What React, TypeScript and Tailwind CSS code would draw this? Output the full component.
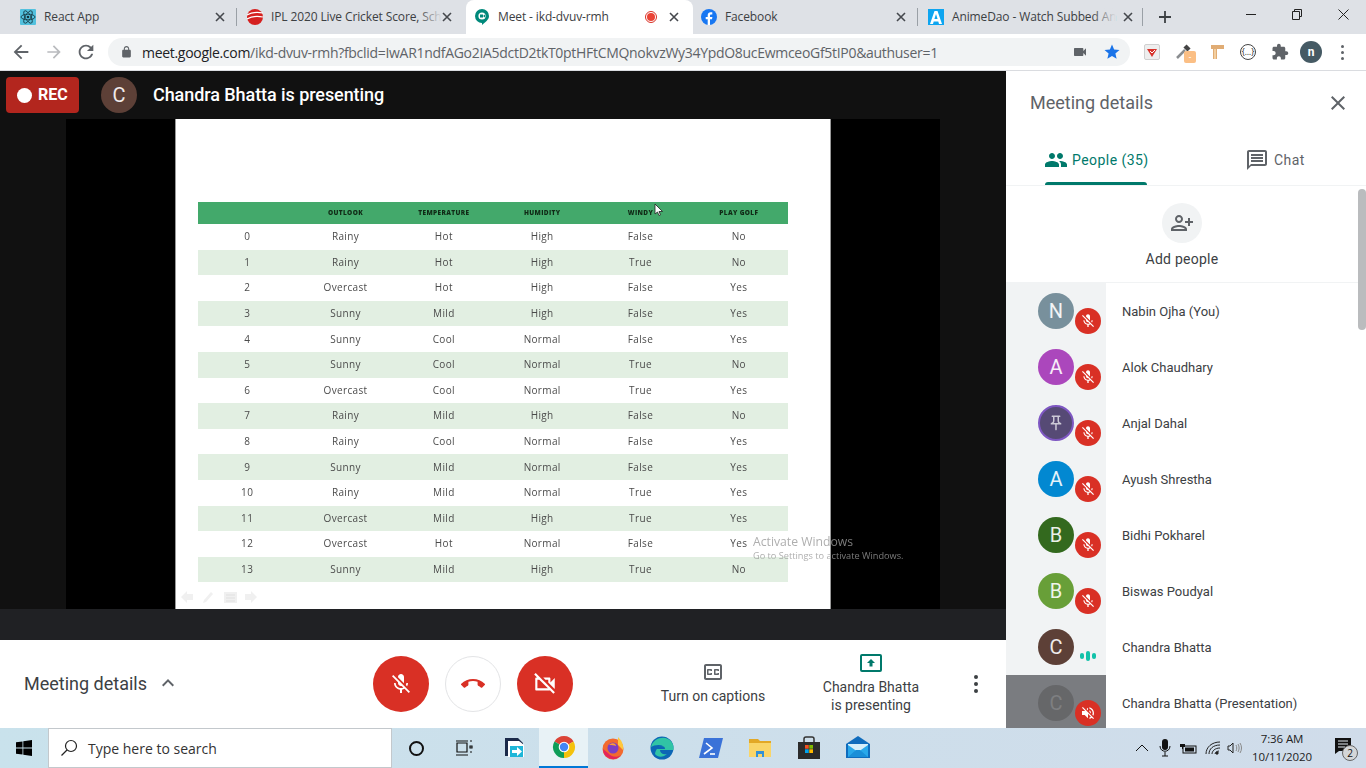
import React from "react";

const P = {
  micOff: "M19 11h-1.7c0 .74-.16 1.43-.43 2.05l1.23 1.23c.56-.98.9-2.09.9-3.28zm-4.02.17c0-.06.02-.11.02-.17V5c0-1.66-1.34-3-3-3S9 3.34 9 5v.18l5.98 5.99zM4.27 3L3 4.27l6.01 6.01V11c0 1.66 1.33 3 2.99 3 .22 0 .44-.03.65-.08l1.66 1.66c-.71.33-1.5.52-2.31.52-2.76 0-5.3-2.1-5.3-5.1H5c0 3.41 2.72 6.23 6 6.72V21h2v-3.28c.91-.13 1.77-.45 2.54-.9L19.73 21 21 19.73 4.27 3z",
  camOff: "M9.56 8l-2-2-4.15-4.14L2 3.27 4.73 6H4c-.55 0-1 .45-1 1v10c0 .55.45 1 1 1h12c.21 0 .39-.08.55-.18L19.73 21l1.41-1.41-8.86-8.86L9.56 8zM5 16V8h1.73l8 8H5zm10-8v2.61l6 6V6.5l-4 4V7c0-.55-.45-1-1-1h-5.61l2 2H15z",
  callEnd: "M12 9c-1.6 0-3.15.25-4.6.72v3.1c0 .39-.23.74-.56.9-.98.49-1.87 1.12-2.66 1.85-.18.18-.43.28-.7.28-.28 0-.53-.11-.71-.29L.29 13.08c-.18-.17-.29-.42-.29-.7 0-.28.11-.53.29-.71C3.34 8.78 7.46 7 12 7s8.66 1.78 11.71 4.67c.18.18.29.43.29.71 0 .28-.11.53-.29.71l-2.48 2.48c-.18.18-.43.29-.71.29-.27 0-.52-.11-.7-.28-.79-.74-1.69-1.36-2.67-1.85-.33-.16-.56-.5-.56-.9v-3.1C15.15 9.25 13.6 9 12 9z",
  people: "M16 11c1.66 0 2.99-1.34 2.99-3S17.66 5 16 5c-1.66 0-3 1.34-3 3s1.34 3 3 3zm-8 0c1.66 0 2.99-1.34 2.99-3S9.66 5 8 5C6.34 5 5 6.34 5 8s1.34 3 3 3zm0 2c-2.33 0-7 1.17-7 3.5V19h14v-2.5c0-2.33-4.67-3.5-7-3.5zm8 0c-.29 0-.62.02-.97.05 1.16.84 1.97 1.97 1.97 3.45V19h6v-2.5c0-2.33-4.67-3.5-7-3.5z",
  chat: "M20 2H4c-1.1 0-2 .9-2 2v18l4-4h14c1.1 0 2-.9 2-2V4c0-1.1-.9-2-2-2zm0 14H6l-2 2V4h16v12zM6 12h12v2H6zM6 9h12v2H6zM6 6h12v2H6z",
  personAdd: "M15 12c2.21 0 4-1.79 4-4s-1.79-4-4-4-4 1.79-4 4 1.79 4 4 4zm0-6c1.1 0 2 .9 2 2s-.9 2-2 2-2-.9-2-2 .9-2 2-2zm0 8c-2.67 0-8 1.34-8 4v2h16v-2c0-2.66-5.33-4-8-4zm-6 4c.22-.72 3.31-2 6-2 2.7 0 5.8 1.29 6 2H9zm-3-3v-3h3v-2H6V7H4v3H1v2h3v3z",
  volOff: "M16.5 12c0-1.77-1.02-3.29-2.5-4.03v2.21l2.45 2.45c.03-.2.05-.41.05-.63zm2.5 0c0 .94-.2 1.82-.54 2.64l1.51 1.51C20.63 14.91 21 13.5 21 12c0-4.28-2.99-7.86-7-8.77v2.06c2.89.86 5 3.54 5 6.71zM4.27 3L3 4.27 7.73 9H3v6h4l5 5v-6.73l4.25 4.25c-.67.52-1.42.93-2.25 1.18v2.06c1.38-.31 2.63-.95 3.69-1.81L19.73 21 21 19.73l-9-9L4.27 3zM12 4L9.91 6.09 12 8.18V4z",
  cc: "M19 4H5c-1.11 0-2 .9-2 2v12c0 1.1.89 2 2 2h14c1.1 0 2-.9 2-2V6c0-1.1-.9-2-2-2zm0 14H5V6h14v12zM7 15h3c.55 0 1-.45 1-1v-1H9.5v.5h-2v-3h2v.5H11v-1c0-.55-.45-1-1-1H7c-.55 0-1 .45-1 1v4c0 .55.45 1 1 1zm7 0h3c.55 0 1-.45 1-1v-1h-1.5v.5h-2v-3h2v.5H18v-1c0-.55-.45-1-1-1h-3c-.55 0-1 .45-1 1v4c0 .55.45 1 1 1z",
  close: "M19 6.41L17.59 5 12 10.59 6.41 5 5 6.41 10.59 12 5 17.59 6.41 19 12 13.41 17.59 19 19 17.59 13.41 12z",
  up: "M7.41 15.41L12 10.83l4.59 4.58L18 14l-6-6-6 6z",
  pin: "M14 4v5c0 1.12.37 2.16 1 3H9c.65-.86 1-1.9 1-3V4h4m3-2H7c-.55 0-1 .45-1 1s.45 1 1 1h1v5c0 1.66-1.34 3-3 3v2h5.97v7l1 1 1-1v-7H19v-2c-1.66 0-3-1.34-3-3V4h1c.55 0 1-.45 1-1s-.45-1-1-1z",
};

function Ic({ d, size = 24, className = "", flip = false }: { d: string; size?: number; className?: string; flip?: boolean }) {
  return (
    <svg width={size} height={size} viewBox="0 0 24 24" className={className} fill="currentColor">
      <path d={d} transform={flip ? "translate(24 0) scale(-1 1)" : undefined} />
    </svg>
  );
}

const TabX = () => (
  <svg width="10" height="10" viewBox="0 0 10 10" className="shrink-0 text-[#45484d]">
    <path d="M1 1l8 8M9 1l-8 8" stroke="currentColor" strokeWidth="1.6" />
  </svg>
);

const ReactFav = () => (
  <svg width="16" height="16" viewBox="0 0 16 16">
    <rect width="16" height="16" rx="1" fill="#53c1de" />
    <g fill="none" stroke="#13323c" strokeWidth="0.8">
      <ellipse cx="8" cy="8" rx="7" ry="2.8" />
      <ellipse cx="8" cy="8" rx="7" ry="2.8" transform="rotate(60 8 8)" />
      <ellipse cx="8" cy="8" rx="7" ry="2.8" transform="rotate(120 8 8)" />
    </g>
    <circle cx="8" cy="8" r="1.3" fill="#13323c" />
  </svg>
);
const IplFav = () => (
  <svg width="16" height="16" viewBox="0 0 16 16">
    <circle cx="8" cy="8" r="8" fill="#d5201f" />
    <path d="M0 6c5-3 11-3 16-2M0 10c5-3 11-3 16-2" stroke="#fff" strokeWidth="1.1" fill="none" />
  </svg>
);
const MeetFav = () => (
  <svg width="16" height="16" viewBox="0 0 16 16">
    <path d="M8 0a7 7 0 0 1 7 7c0 4-4 6-7 9V14a7 7 0 0 1 0-14z" fill="#00897b" />
    <circle cx="8" cy="7" r="3.6" fill="#fff" />
    <path d="M6 5.5h3v3H6zM9 7l2-1.5v3z" fill="#00897b" />
  </svg>
);
const FbFav = () => (
  <svg width="16" height="16" viewBox="0 0 16 16">
    <circle cx="8" cy="8" r="8" fill="#1877f2" />
    <path d="M11 10.3l.4-2.3H9V6.6c0-.7.3-1.2 1.3-1.2h1V3.3S10.400 3.200 9.600 3.200C7.900 3.200 6.700 4.200 6.700 6.200V8H4.700v2.300h2V16h2.300v-5.700z" fill="#fff" />
  </svg>
);
const AnimeFav = () => (
  <svg width="16" height="16" viewBox="0 0 16 16">
    <rect width="16" height="16" fill="#0ea5f0" />
    <path d="M6.500 2h3L14 15h-3l-.7-2.500H5.700L5 15H2zM6.400 10h3.200L8 5z" fill="#fff" fillRule="evenodd" />
  </svg>
);

const tabs = [
  { t: "React App", f: <ReactFav />, fade: false, sep: "right-[2px]" },
  { t: "IPL 2020 Live Cricket Score, Sch", f: <IplFav />, fade: true, sep: "" },
  { t: "Meet - ikd-dvuv-rmh", f: <MeetFav />, active: true, fade: false, sep: "" },
  { t: "Facebook", f: <FbFav />, fade: false, sep: "right-[2px]" },
  { t: "AnimeDao - Watch Subbed An", f: <AnimeFav />, fade: true, sep: "right-[4px]" },
];

function ChromeTop() {
  return (
    <div className="h-[34px] bg-[#dee1e6] flex items-end pl-[12px] shrink-0 relative">
      {tabs.map((tb, i) => (
        <div
          key={i}
          className={`w-[227px] h-[34px] flex items-center pl-[8px] pr-[14px] shrink-0 relative ${tb.active ? "bg-white rounded-t-[8px]" : ""}`}
        >
          <span className="w-[16px] h-[16px] shrink-0 flex">{tb.f}</span>
          <span className="ml-[8px] flex-1 min-w-0 whitespace-nowrap text-[12px] text-[#3c4043] font-['Open_Sans',sans-serif] tracking-[-0.12px]">
            <span className="relative inline-block">
              {tb.t}
              {tb.fade && <span className="absolute right-0 top-0 bottom-0 w-[24px] bg-gradient-to-r from-transparent to-[#dee1e6]" />}
            </span>
          </span>
          {tb.active && (
            <span className="w-[12px] h-[12px] rounded-full border border-[#d93025] flex items-center justify-center mr-[8px] shrink-0">
              <span className="w-[8px] h-[8px] rounded-full bg-[#ea4335]" />
            </span>
          )}
          <span className="ml-[4px] flex"><TabX /></span>
          {tb.sep && <span className={`absolute top-[8px] h-[18px] w-px bg-[#9aa0a6] ${tb.sep}`} />}
        </div>
      ))}
      <div className="ml-[11px] mb-[10px] flex text-[#3c4043]">
        <svg width="14" height="14" viewBox="0 0 14 14"><path d="M7 1v12M1 7h12" stroke="currentColor" strokeWidth="1.8" /></svg>
      </div>
      <div className="ml-auto flex h-[34px] pt-[9px]">
        <span className="w-[46px] flex justify-center">
          <svg width="10" height="10" viewBox="0 0 10 10"><path d="M0 5.500h10" stroke="#222" strokeWidth="1" /></svg>
        </span>
        <span className="w-[46px] flex justify-center">
          <svg width="10" height="11" viewBox="0 0 10 11" fill="none" stroke="#222"><path d="M.5 2.500h7v8h-7zM2.500 2.500v-2h7v7h-2" /></svg>
        </span>
        <span className="w-[46px] flex justify-center">
          <svg width="11" height="11" viewBox="0 0 11 11" fill="none" stroke="#222"><path d="M.5.5l10 10M10.500.5l-10 10" /></svg>
        </span>
      </div>
    </div>
  );
}

function Toolbar() {
  return (
    <div className="h-[37px] bg-white flex items-center shrink-0 border-b border-[#dadce0] text-[#5f6368]">
      <div className="w-[108px] flex items-center pl-[10px] shrink-0">
        <svg width="22" height="22" viewBox="0 0 24 24" fill="currentColor"><path d="M20 11H7.830l5.590-5.590L12 4l-8 8 8 8 1.410-1.410L7.830 13H20z" /></svg>
        <svg width="20" height="20" viewBox="0 0 24 24" fill="#b9bbbe" className="ml-[12px]"><path d="M4 13h12.170l-5.590 5.590L12 20l8-8-8-8-1.410 1.410L16.170 11H4z" /></svg>
        <svg width="22" height="22" viewBox="0 0 24 24" fill="currentColor" className="ml-[11px]"><path d="M17.650 6.350A7.958 7.958 0 0 0 12 4c-4.420 0-7.990 3.580-7.990 8s3.570 8 7.990 8c3.730 0 6.840-2.550 7.730-6h-2.080A5.990 5.990 0 0 1 12 18c-3.310 0-6-2.690-6-6s2.690-6 6-6c1.660 0 3.140.69 4.220 1.780L13 11h7V4l-2.350 2.350z" /></svg>
      </div>
      <div className="w-[1022px] h-[28px] rounded-full bg-[#f1f3f4] flex items-center pl-[12px] pr-[9px] shrink-0">
        <svg width="13" height="14" viewBox="0 0 24 24" fill="currentColor" className="shrink-0"><path d="M18 8h-1V6c0-2.760-2.240-5-5-5S7 3.240 7 6v2H6c-1.100 0-2 .9-2 2v10c0 1.100.9 2 2 2h12c1.100 0 2-.9 2-2V10c0-1.100-.9-2-2-2zM9 6c0-1.660 1.340-3 3-3s3 1.340 3 3v2H9V6z" /></svg>
        <span className="ml-[9px] text-[14px] font-['Open_Sans',sans-serif] tracking-[-0.3px] whitespace-nowrap">
          <span className="text-[#202124]">meet.google.com</span>
          <span className="text-[#5f6368]">/ikd-dvuv-rmh?fbclid=IwAR1ndfAGo2IA5dctD2tkT0ptHFtCMQnokvzWy34YpdO8ucEwmceoGf5tIP0&amp;authuser=1</span>
        </span>
        <svg width="16" height="16" viewBox="0 0 24 24" fill="#5f6368" className="ml-auto"><path d="M17 10.500V7c0-.55-.45-1-1-1H4c-.55 0-1 .45-1 1v10c0 .55.45 1 1 1h12c.55 0 1-.45 1-1v-3.500l4 4v-11l-4 4z" /></svg>
        <svg width="18" height="18" viewBox="0 0 24 24" fill="#1a73e8" className="ml-[15px]"><path d="M12 17.270L18.180 21l-1.640-7.030L22 9.240l-7.190-.61L12 2 9.190 8.630 2 9.240l5.460 4.730L5.820 21z" /></svg>
      </div>
      <div className="flex-1 relative flex items-center">
        <span className="ml-[14px] w-[16px] h-[16px] bg-[#eeeeee] border border-[#d0d0d0] flex items-center justify-center rounded-[2px]">
          <svg width="10" height="9" viewBox="0 0 10 9"><path d="M0 1h10L5 9z" fill="#d8322a" /><path d="M3 3l2 2 3-3" stroke="#fff" strokeWidth="1" fill="none" /></svg>
        </span>
        <span className="ml-[15px] relative w-[20px] h-[20px]">
          <svg width="18" height="18" viewBox="0 0 18 18"><path d="M2 16L10 8" stroke="#8a8d90" strokeWidth="2.500" /><path d="M10 4l4 4" stroke="#444" strokeWidth="4.500" /></svg>
          <span className="absolute left-[9px] top-[9px] w-[12px] h-[12px] bg-[#fbbf85] rounded-[2px] text-[8px] leading-[11px] text-center text-white">-</span>
        </span>
        <svg width="16" height="16" viewBox="0 0 16 16" className="ml-[14px]"><path d="M2 1h13v4H8v10H4V5H2z" fill="#e0ac74" /><path d="M5 5h2v10H5z" fill="#f3cfa0" /></svg>
        <span className="ml-[15px] w-[16px] h-[16px] rounded-full border border-[#444] flex items-center justify-center text-[8px] leading-none text-[#333]">{"{…}"}</span>
        <svg width="18" height="18" viewBox="0 0 24 24" fill="#5f6368" className="ml-[15px]"><path d="M20.500 11H19V7c0-1.100-.9-2-2-2h-4V3.500C13 2.120 11.880 1 10.500 1S8 2.120 8 3.500V5H4c-1.100 0-1.990.9-1.990 2v3.800H3.500c1.490 0 2.700 1.210 2.700 2.700s-1.210 2.700-2.700 2.700H2V20c0 1.100.9 2 2 2h3.800v-1.500c0-1.490 1.210-2.700 2.700-2.700 1.490 0 2.700 1.210 2.700 2.700V22H17c1.100 0 2-.9 2-2v-4h1.500c1.380 0 2.500-1.120 2.500-2.500S21.880 11 20.500 11z" /></svg>
        <span className="ml-[11px] w-[22px] h-[22px] rounded-full bg-[#455a64] text-white text-[12px] font-bold flex items-center justify-center font-['Roboto',sans-serif]">n</span>
        <span className="ml-[19px] flex flex-col gap-[3px]">
          <span className="w-[3px] h-[3px] rounded-full bg-[#5f6368]" />
          <span className="w-[3px] h-[3px] rounded-full bg-[#5f6368]" />
          <span className="w-[3px] h-[3px] rounded-full bg-[#5f6368]" />
        </span>
      </div>
    </div>
  );
}

const rows = [
  ["0", "Rainy", "Hot", "High", "False", "No"],
  ["1", "Rainy", "Hot", "High", "True", "No"],
  ["2", "Overcast", "Hot", "High", "False", "Yes"],
  ["3", "Sunny", "Mild", "High", "False", "Yes"],
  ["4", "Sunny", "Cool", "Normal", "False", "Yes"],
  ["5", "Sunny", "Cool", "Normal", "True", "No"],
  ["6", "Overcast", "Cool", "Normal", "True", "Yes"],
  ["7", "Rainy", "Mild", "High", "False", "No"],
  ["8", "Rainy", "Cool", "Normal", "False", "Yes"],
  ["9", "Sunny", "Mild", "Normal", "False", "Yes"],
  ["10", "Rainy", "Mild", "Normal", "True", "Yes"],
  ["11", "Overcast", "Mild", "High", "True", "Yes"],
  ["12", "Overcast", "Hot", "Normal", "False", "Yes"],
  ["13", "Sunny", "Mild", "High", "True", "No"],
];

function Slide() {
  return (
    <div className="w-[656px] bg-white border-l border-r border-[#999] pl-[22px] pr-[42px] pt-[83px] relative shrink-0 font-['Open_Sans',sans-serif]">
      <div className="grid grid-cols-6 h-[22px] items-center bg-[#43a96b] text-center text-[6.500px] font-extrabold text-[#102a16] tracking-[0.35px] blur-[0.2px]">
        <span />
        <span>OUTLOOK</span>
        <span>TEMPERATURE</span>
        <span>HUMIDITY</span>
        <span>WINDY</span>
        <span>PLAY GOLF</span>
      </div>
      {rows.map((r, i) => (
        <div key={i} className={`grid grid-cols-6 h-[25.6px] items-center text-center text-[10px] tracking-[0.35px] text-[#4b4b4b] blur-[0.3px] ${i % 2 ? "bg-[#e2efe2]" : "bg-white"}`}>
          {r.map((c, j) => (
            <span key={j}>{c}</span>
          ))}
        </div>
      ))}
      <svg width="80" height="14" viewBox="0 0 80 14" className="mt-[8px] -ml-[17px]" fill="#f0f0f0">
        <path d="M0 7l6-6v3h6v6H6v3z" />
        <path d="M22 13l1-3 7-8 2 2-7 8z" />
        <path d="M43 2h13v11H43z" />
        <path d="M45 5h9M45 8h9M45 11h9" stroke="#dcdcdc" strokeWidth="0.8" />
        <path d="M76 7l-6-6v3h-6v6h6v3z" />
      </svg>
      <svg width="10" height="14" viewBox="0 0 10 14" className="absolute left-[478px] top-[84px]">
        <path d="M1 1v10l2.500-2 1.500 3.500 1.500-.7L5 8.500h3.500z" fill="#fff" stroke="#222" strokeWidth="0.8" />
      </svg>
    </div>
  );
}

function Stage() {
  return (
    <div className="flex-1 flex flex-col bg-[#111111] min-h-0 relative">
      <div className="h-[48px] flex items-center shrink-0 pl-[6px] font-['Roboto',sans-serif]">
        <div className="w-[73px] h-[36px] rounded-[4px] bg-[#b3261e] flex items-center pl-[11px] text-white text-[16px] font-bold">
          <span className="w-[15px] h-[15px] rounded-full bg-white mr-[6px]" />
          REC
        </div>
        <div className="ml-[22px] w-[36px] h-[36px] rounded-full bg-[#5d4037] flex items-center justify-center text-[#f0eaea] text-[20px]">C</div>
        <span className="ml-[16px] -mt-[2px] text-white text-[18px] font-medium tracking-[-0.07px]">Chandra Bhatta is presenting</span>
      </div>
      <div className="flex-1 min-h-0 pl-[66px] flex">
        <div className="w-[874px] bg-black pl-[109px] flex overflow-hidden">
          <Slide />
        </div>
      </div>
      <div className="h-[31px] bg-[#202124] shrink-0" />
      <div className="absolute left-[753px] top-[463px] font-['Open_Sans',sans-serif] text-[#9a9a9a] opacity-80 whitespace-nowrap">
        <div className="text-[12.200px] leading-[16px]">Activate Windows</div>
        <div className="text-[9.200px] leading-[12px]">Go to Settings to activate Windows.</div>
      </div>
    </div>
  );
}

function Controls() {
  return (
    <div className="h-[88px] bg-white flex items-center shrink-0 relative font-['Roboto',sans-serif]">
      <div className="w-[373px] pl-[24px] flex items-center shrink-0 text-[#5f6368]">
        <span className="text-[18px] text-[#3c4043] -mt-[2px]">Meeting details</span>
        <Ic d={P.up} size={24} className="ml-[9px] -mt-[2px]" />
      </div>
      <button className="w-[56px] h-[56px] rounded-full bg-[#d93025] text-white flex items-center justify-center shrink-0">
        <Ic d={P.micOff} size={24} />
      </button>
      <button className="ml-[16px] w-[56px] h-[56px] rounded-full bg-white border border-[#e3e4e6] text-[#d93025] flex items-center justify-center shrink-0">
        <Ic d={P.callEnd} size={24} />
      </button>
      <button className="ml-[16px] w-[56px] h-[56px] rounded-full bg-[#d93025] text-white flex items-center justify-center shrink-0">
        <Ic d={P.camOff} size={26} />
      </button>
      <div className="w-[140px] ml-[70px] flex flex-col items-center shrink-0 text-[#5f6368] pb-[2px]">
        <Ic d={P.cc} size={24} />
        <span className="mt-[2px] text-[14px] leading-[20px] text-[#3c4043] whitespace-nowrap">Turn on captions</span>
      </div>
      <div className="w-[120px] ml-[28px] flex flex-col items-center shrink-0 text-[#3c4043]">
        <svg width="22" height="18" viewBox="0 0 22 18">
          <rect x="1" y="1" width="20" height="16" rx="1" fill="none" stroke="#00796b" strokeWidth="2" />
          <path d="M11 5l4 4h-2.500v3.500h-3V9H7z" fill="#00796b" />
        </svg>
        <span className="text-[14px] leading-[18px] text-center mt-[6px]">Chandra Bhatta<br />is presenting</span>
      </div>
      <div className="ml-[43px] flex flex-col gap-[3px]">
        <span className="w-[4px] h-[4px] rounded-full bg-[#3c4043]" />
        <span className="w-[4px] h-[4px] rounded-full bg-[#3c4043]" />
        <span className="w-[4px] h-[4px] rounded-full bg-[#3c4043]" />
      </div>
    </div>
  );
}

const people = [
  { n: "Nabin Ojha (You)", l: "N", c: "bg-[#78909c]", m: "mic" },
  { n: "Alok Chaudhary", l: "A", c: "bg-[#ab47bc]", m: "mic" },
  { n: "Anjal Dahal", l: "", c: "bg-[#564a75] border-2 border-[#7e57c2]", m: "mic", pin: true },
  { n: "Ayush Shrestha", l: "A", c: "bg-[#0288d1]", m: "mic" },
  { n: "Bidhi Pokharel", l: "B", c: "bg-[#33691e]", m: "mic" },
  { n: "Biswas Poudyal", l: "B", c: "bg-[#689f38]", m: "mic" },
  { n: "Chandra Bhatta", l: "C", c: "bg-[#5d4037]", m: "talk" },
  { n: "Chandra Bhatta (Presentation)", l: "C", c: "bg-[#666769]", m: "vol", dim: true },
];

function Person({ p }: { p: (typeof people)[number] }) {
  return (
    <div className="h-[56px] flex shrink-0">
      <div className={`w-[100px] shrink-0 relative pl-[32px] pt-[10px] ${p.dim ? "bg-[#7a7c80]" : "bg-[#f1f3f4]"}`}>
        <div className={`w-[36px] h-[36px] rounded-full flex items-center justify-center text-[20px] ${p.dim ? "text-[#7e7f81]" : "text-white/90"} ${p.c}`}>
          {p.pin ? <Ic d={P.pin} size={18} className="text-white/70" /> : p.l}
        </div>
        {p.m !== "talk" ? (
          <div className="absolute left-[69px] top-[25px] w-[26px] h-[26px] rounded-full bg-[#d93025] flex items-center justify-center text-white">
            <Ic d={p.m === "vol" ? P.volOff : P.micOff} size={16} />
          </div>
        ) : (
          <div className="absolute left-[74px] top-[32px] flex items-center gap-[2px]">
            <span className="w-[4px] h-[6px] rounded-full bg-[#12c2a9]" />
            <span className="w-[4px] h-[10px] rounded-full bg-[#12c2a9]" />
            <span className="w-[4px] h-[6px] rounded-full bg-[#12c2a9]" />
          </div>
        )}
      </div>
      <div className="pl-[16px] pt-[20px] text-[13px] leading-[18px] text-[#3c4043] whitespace-nowrap">{p.n}</div>
    </div>
  );
}

function Panel() {
  return (
    <div className="w-[360px] shrink-0 bg-white flex flex-col font-['Roboto',sans-serif] relative overflow-hidden">
      <div className="h-[64px] flex items-center pl-[24px] pr-[16px] justify-between shrink-0">
        <span className="text-[18px] text-[#5f6368] -mt-[2px]">Meeting details</span>
        <Ic d={P.close} size={24} className="text-[#5f6368]" />
      </div>
      <div className="h-[51px] border-b border-[#f1f3f4] flex shrink-0 relative">
        <div className="ml-[38px] w-[103px] relative flex items-center text-[#00796b]">
          <Ic d={P.people} size={24} className="shrink-0 -mt-[1px]" />
          <span className="ml-[4px] text-[14px] tracking-[0.45px] whitespace-nowrap">People (35)</span>
          <span className="absolute left-[1px] right-0 bottom-0 h-[3px] rounded-t-[3px] bg-[#00796b]" />
        </div>
        <div className="ml-[98px] flex items-center text-[#5f6368]">
          <Ic d={P.chat} size={24} className="shrink-0" />
          <span className="ml-[5px] text-[14px] tracking-[0.45px]">Chat</span>
        </div>
      </div>
      <div className="h-[97px] border-b border-[#f1f3f4] flex flex-col items-center pt-[17px] pr-[8px] shrink-0">
        <div className="w-[40px] h-[40px] rounded-full bg-[#f1f3f4] flex items-center justify-center text-[#5f6368]">
          <Ic d={P.personAdd} size={24} flip />
        </div>
        <span className="mt-[6px] text-[14px] leading-[20px] text-[#3c4043] tracking-[0.25px]">Add people</span>
      </div>
      <div className="flex-1 overflow-hidden flex flex-col">
        {people.map((p) => (
          <Person key={p.n} p={p} />
        ))}
      </div>
      <div className="absolute right-0 top-[118px] w-[8px] h-[141px] rounded-[4px] bg-[#babcbe]" />
    </div>
  );
}

function Taskbar() {
  const cell = "w-[49px] flex items-center justify-center shrink-0";
  return (
    <div className="h-[40px] shrink-0 bg-gradient-to-r from-[#c9e2ec] to-[#d0dcea] flex items-stretch font-['Open_Sans',sans-serif] text-[#111]">
      <div className="w-[48px] flex items-center justify-center shrink-0">
        <svg width="16" height="16" viewBox="0 0 16 16" fill="#000"><path d="M0 2.300l6.500-.9v6.200H0zM7.300 1.300L16 0v7.600H7.300zM0 8.400h6.500v6.200L0 13.700zM7.300 8.400H16V16l-8.700-1.200z" /></svg>
      </div>
      <div className="w-[344px] bg-white border border-[#c3c8cc] flex items-center shrink-0 pl-[11px]">
        <svg width="18" height="18" viewBox="0 0 18 18" fill="none" stroke="#222" strokeWidth="1.200"><circle cx="11" cy="7" r="5.500" /><path d="M7 11l-5.500 5.500" /></svg>
        <span className="ml-[10px] text-[14px] text-[#333]">Type here to search</span>
      </div>
      <div className={cell}>
        <span className="w-[15px] h-[15px] rounded-full border-[2px] border-[#111]" />
      </div>
      <div className={cell}>
        <svg width="18" height="16" viewBox="0 0 18 16" fill="none" stroke="#111" strokeWidth="1.200" className="-ml-[4px]"><path d="M2 3h10v9H2zM1 1h12M1 15h12" /><path d="M15 1h2M15 6h2v2h-2zM15 12h2" /></svg>
      </div>
      <div className={cell}>
        <svg width="24" height="24" viewBox="0 0 24 24"><path d="M2 2h13l5 5v4H6v9H2z" fill="#1b2a4a" /><path d="M5 5h11l5 4v12H5z" fill="#fff" /><path d="M7 10h13v11H7z" fill="#1fb6d8" /><path d="M9 14h5v-3l5 4.500-5 4.500v-3H9z" fill="#fff" /></svg>
      </div>
      <div className={`${cell} w-[48px] bg-[#e8f2f6] border-b-[2px] border-[#0078d7]`}>
        <svg width="24" height="24" viewBox="0 0 24 24">
          <path d="M12 12L2.470 6.500A11 11 0 0 1 21.530 6.500z" fill="#db4437" />
          <path d="M12 12L21.530 6.500A11 11 0 0 1 12 23z" fill="#f4c20d" />
          <path d="M12 12L12 23A11 11 0 0 1 2.470 6.500z" fill="#0f9d58" />
          <circle cx="12" cy="12" r="5.300" fill="#fff" />
          <circle cx="12" cy="12" r="4.200" fill="#4285f4" />
        </svg>
      </div>
      <div className={cell}>
        <svg width="24" height="24" viewBox="0 0 24 24">
          <circle cx="12" cy="13" r="10.500" fill="#f26a2e" />
          <path d="M17 1c3 3 6 7 5 13l-5-5z" fill="#ffc83d" />
          <path d="M2 13a10 10 0 0 0 18 6c-4 3-10 2-13-2z" fill="#e3245c" />
          <circle cx="12" cy="12" r="5.500" fill="#7b3fc4" />
          <path d="M8 9c3-3 7-2 7 1-2-1-4-1-7-1z" fill="#ff9f30" />
        </svg>
      </div>
      <div className={cell}>
        <svg width="24" height="24" viewBox="0 0 24 24">
          <circle cx="12" cy="12" r="11.500" fill="#0c66b5" />
          <path d="M1 11C3 3 12 0 18 3c4 2 6 6 5.500 11H10c0 3 3 5 7 4-3 3-9 4-12 0 1-6 5-9 9-8-5-2-10-1-13 1z" fill="#31c4a5" />
          <path d="M7 13h8c0-2-1-3-4-3s-4 1-4 3z" fill="#0c66b5" />
        </svg>
      </div>
      <div className={cell}>
        <svg width="24" height="20" viewBox="0 0 24 20"><path d="M5 0h19l-5 20H0z" fill="#3a72d8" /><path d="M7 5l6 5-8 6" stroke="#fff" strokeWidth="1.600" fill="none" /><path d="M11 16h5" stroke="#fff" strokeWidth="1.600" /></svg>
      </div>
      <div className={cell}>
        <svg width="22" height="20" viewBox="0 0 22 20"><path d="M0 1h9l2 2h11v16H0z" fill="#e2a826" /><path d="M0 5h22v14H0z" fill="#f9d568" /><path d="M7 13h8v6h-2v-3H9v3H7z" fill="#3291d6" /></svg>
      </div>
      <div className={cell}>
        <svg width="24" height="24" viewBox="0 0 24 24"><path d="M7 6V3a2 2 0 0 1 2-2h6a2 2 0 0 1 2 2v3" fill="none" stroke="#333" strokeWidth="1.500" /><path d="M1 6h22v17H1z" fill="#2b2b2b" /><path d="M8 9h3.700v3.700H8z" fill="#f25022" /><path d="M12.300 9H16v3.700h-3.700z" fill="#7fba00" /><path d="M8 13.300h3.700V17H8z" fill="#00a4ef" /><path d="M12.300 13.300H16V17h-3.700z" fill="#ffb900" /></svg>
      </div>
      <div className={cell}>
        <svg width="24" height="24" viewBox="0 0 24 24"><path d="M12 0L24 8v14H0V8z" fill="#0f6cbd" /><path d="M2 9h20v12H2z" fill="#29a8ea" /><path d="M2 9l10 7 10-7v-1H2z" fill="#d6effa" /><path d="M2 21l8-7h4l8 7z" fill="#1a8fd8" /></svg>
      </div>
      <div className="flex-1 flex items-center justify-end pr-[6px] min-w-0">
        <svg width="14" height="8" viewBox="0 0 14 8" fill="none" stroke="#111" strokeWidth="1"><path d="M1 7l6-6 6 6" /></svg>
        <svg width="14" height="18" viewBox="0 0 14 18" className="ml-[9px]"><rect x="4" y="0" width="6" height="11" rx="3" fill="#111" /><path d="M2 7c0 7 10 7 10 0M7 13v4M4 17h6" stroke="#111" strokeWidth="1" fill="none" /></svg>
        <svg width="17" height="12" viewBox="0 0 17 12" className="ml-[8px]" fill="#111"><path d="M4 0v2M1 0v2M0 2h5v3H3v2H2V5H0z" /><rect x="3" y="4" width="13" height="7" fill="none" stroke="#111" /><rect x="5" y="5.500" width="9" height="4" /></svg>
        <svg width="16" height="14" viewBox="0 0 16 14" className="ml-[8px]" fill="none" stroke="#222" strokeWidth="1"><path d="M1 13C1 6 7 1 15 1M4 13c0-5 4-9 11-9M7 13c0-3 3-6 8-6M10 13c0-1 2-3 4-3" /><circle cx="12" cy="12" r="1.200" fill="#222" /></svg>
        <svg width="16" height="12" viewBox="0 0 16 12" className="ml-[6px]" fill="none" stroke="#222" strokeWidth="1"><path d="M1 4h2l3-3v10L3 8H1z" /><path d="M9 3c1 2 1 4 0 6M11 2c1.500 2.500 1.500 5.500 0 8M13 1c2 3 2 7 0 10" stroke="#888" /></svg>
        <div className="ml-[3px] w-[72px] text-center text-[11.500px] leading-[18px] text-[#222] whitespace-nowrap tracking-[-0.1px]">
          <div>7:36 AM</div>
          <div>10/11/2020</div>
        </div>
        <div className="ml-[10px] w-[32px] h-[30px] relative shrink-0">
          <svg width="18" height="18" viewBox="0 0 18 18" className="absolute left-[6px] top-[4px]"><path d="M1 1h16v13H5l-4 3z" fill="#111" /><path d="M4 4h10M4 7h10M4 10h7" stroke="#e6edf3" strokeWidth="1" /></svg>
          <span className="absolute left-[14px] top-[12px] w-[16px] h-[16px] rounded-full bg-[#d4d6d8] border border-[#666] text-[10px] leading-[14px] text-center text-[#111]">2</span>
        </div>
      </div>
    </div>
  );
}

export default function App() {
  return (
    <div className="w-[1366px] h-[768px] flex flex-col overflow-hidden bg-white">
      <ChromeTop />
      <Toolbar />
      <div className="flex-1 flex min-h-0">
        <div className="w-[1006px] flex flex-col shrink-0 min-h-0">
          <Stage />
          <Controls />
        </div>
        <Panel />
      </div>
      <Taskbar />
    </div>
  );
}
